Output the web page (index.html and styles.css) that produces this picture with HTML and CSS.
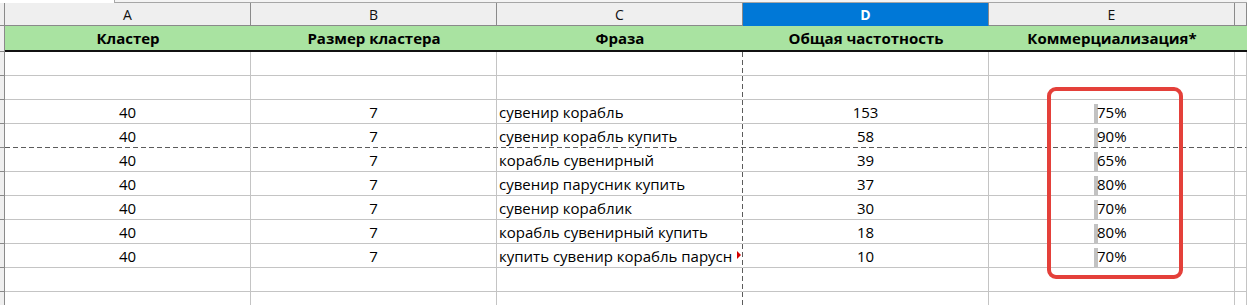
FILE: index.html
```html
<!DOCTYPE html>
<html lang="ru">
<head>
<meta charset="utf-8">
<title>Кластеры</title>
<link rel="stylesheet" href="styles.css">
</head>
<body>
<div class="sheet">
  <div class="topbar"><div class="namebox"></div><div class="fbar"></div></div>
  <div class="row colhead">
    <div class="rh"></div>
    <div class="ch">A</div>
    <div class="ch">B</div>
    <div class="ch">C</div>
    <div class="ch sel">D</div>
    <div class="ch">E</div>
    <div class="ch"></div>
  </div>
  <div class="row head">
    <div class="rh"></div>
    <div class="hc">Кластер</div>
    <div class="hc">Размер кластера</div>
    <div class="hc">Фраза</div>
    <div class="hc">Общая частотность</div>
    <div class="hc">Коммерциализация*</div>
    <div class="hc"></div>
  </div>
  <div class="row data">
    <div class="rh"></div><div class="c num"></div><div class="c num"></div><div class="c txt brk"></div><div class="c num"></div><div class="c"></div><div class="c"></div>
  </div>
  <div class="row data">
    <div class="rh"></div><div class="c num"></div><div class="c num"></div><div class="c txt brk"></div><div class="c num"></div><div class="c"></div><div class="c"></div>
  </div>
  <div class="row data">
    <div class="rh"></div><div class="c num">40</div><div class="c num">7</div><div class="c txt brk"><span class="clip">сувенир корабль</span></div><div class="c num">153</div><div class="c pct">75%</div><div class="c"></div>
  </div>
  <div class="row data pb">
    <div class="rh"></div><div class="c num">40</div><div class="c num">7</div><div class="c txt brk"><span class="clip">сувенир корабль купить</span></div><div class="c num">58</div><div class="c pct">90%</div><div class="c"></div>
  </div>
  <div class="row data">
    <div class="rh"></div><div class="c num">40</div><div class="c num">7</div><div class="c txt brk"><span class="clip">корабль сувенирный</span></div><div class="c num">39</div><div class="c pct">65%</div><div class="c"></div>
  </div>
  <div class="row data">
    <div class="rh"></div><div class="c num">40</div><div class="c num">7</div><div class="c txt brk"><span class="clip">сувенир парусник купить</span></div><div class="c num">37</div><div class="c pct">80%</div><div class="c"></div>
  </div>
  <div class="row data">
    <div class="rh"></div><div class="c num">40</div><div class="c num">7</div><div class="c txt brk"><span class="clip">сувенир кораблик</span></div><div class="c num">30</div><div class="c pct">70%</div><div class="c"></div>
  </div>
  <div class="row data">
    <div class="rh"></div><div class="c num">40</div><div class="c num">7</div><div class="c txt brk"><span class="clip">корабль сувенирный купить</span></div><div class="c num">18</div><div class="c pct">80%</div><div class="c"></div>
  </div>
  <div class="row data">
    <div class="rh"></div><div class="c num">40</div><div class="c num">7</div><div class="c txt brk over"><span class="clip">купить сувенир корабль парусн</span><span class="tri"></span></div><div class="c num">10</div><div class="c pct">70%</div><div class="c"></div>
  </div>
  <div class="row data">
    <div class="rh"></div><div class="c num"></div><div class="c num"></div><div class="c txt brk"></div><div class="c num"></div><div class="c"></div><div class="c"></div>
  </div>
  <div class="row data">
    <div class="rh"></div><div class="c num"></div><div class="c num"></div><div class="c txt brk"></div><div class="c num"></div><div class="c"></div><div class="c"></div>
  </div>
  <div class="mark"></div>
</div>
</body>
</html>
```

FILE: styles.css
```css
html, body {
  margin: 0;
  padding: 0;
  background: #ffffff;
}

body {
  width: 1247px;
  height: 305px;
  overflow: hidden;
  font-family: "Open Sans", "Liberation Sans", sans-serif;
  font-size: 15px;
  color: #000;
}

.sheet {
  position: relative;
  width: 1247px;
}

.topbar {
  height: 3px;
  display: flex;
  background: #f4f4f4;
}

.namebox {
  width: 115px;
  height: 3px;
  box-sizing: border-box;
  background: #ffffff;
  border-right: 1px solid #a8a8a8;
}

.fbar {
  flex: 1;
  height: 3px;
  box-sizing: border-box;
  border-top: 1px solid #f4f4f4;
  border-bottom: 1px solid #a6a6a6;
}

.row {
  display: grid;
  grid-template-columns: 5px repeat(5, 246px) 1fr;
}

.rh {
  box-sizing: border-box;
  background: #efefef;
  border-right: 1px solid #8a8a8a;
  border-bottom: 1px solid #8a8a8a;
}

/* column letters */
.colhead {
  height: 23px;
}

.ch {
  box-sizing: border-box;
  height: 23px;
  background: #efefef;
  border-right: 1px solid #8a8a8a;
  border-bottom: 1px solid #8a8a8a;
  padding-top: 2px;
  line-height: 20px;
  font-size: 14px;
  text-align: center;
  color: #111;
}

.ch.sel {
  background: #0078d7;
  border-bottom-color: #0078d7;
  color: #ffffff;
  font-weight: 700;
}

/* green header row */
.head {
  height: 26px;
}

.hc {
  box-sizing: border-box;
  height: 26px;
  background: #a9e3a1;
  border-bottom: 2px solid #111;
  line-height: 24px;
  text-align: center;
  font-weight: 700;
  white-space: nowrap;
}

/* data rows */
.data {
  height: 24px;
}

.c {
  box-sizing: border-box;
  height: 24px;
  border-right: 1px solid #c4c4c4;
  border-bottom: 1px solid #c4c4c4;
  padding-top: 2px;
  line-height: 21px;
  white-space: nowrap;
}

.num {
  text-align: center;
}

.txt {
  padding-left: 2px;
  position: relative;
}

.clip {
  display: block;
  overflow: hidden;
  white-space: nowrap;
  margin-right: 5px;
}

.brk {
  border-right-color: transparent;
  background: repeating-linear-gradient(180deg, #5c5c5c 0 5px, transparent 5px 8px) right top / 1px 100% no-repeat;
  background-origin: border-box;
}

.pb {
  background: repeating-linear-gradient(90deg, #5c5c5c 0 5px, transparent 5px 8px) 5px 100% / 100% 1px no-repeat;
}

.pb .c {
  border-bottom-color: transparent;
}

.pct {
  padding-left: 108px;
  background: linear-gradient(#c2c2c2, #c2c2c2) 105px 4px / 4px 19px no-repeat;
}

.tri {
  position: absolute;
  right: 1px;
  top: 7px;
  width: 0;
  height: 0;
  border-top: 4px solid transparent;
  border-bottom: 4px solid transparent;
  border-left: 4px solid #d40000;
}

.mark {
  position: absolute;
  left: 1047px;
  top: 87px;
  width: 136px;
  height: 192px;
  box-sizing: border-box;
  border: 4px solid #e4403a;
  border-radius: 9px;
}
```
